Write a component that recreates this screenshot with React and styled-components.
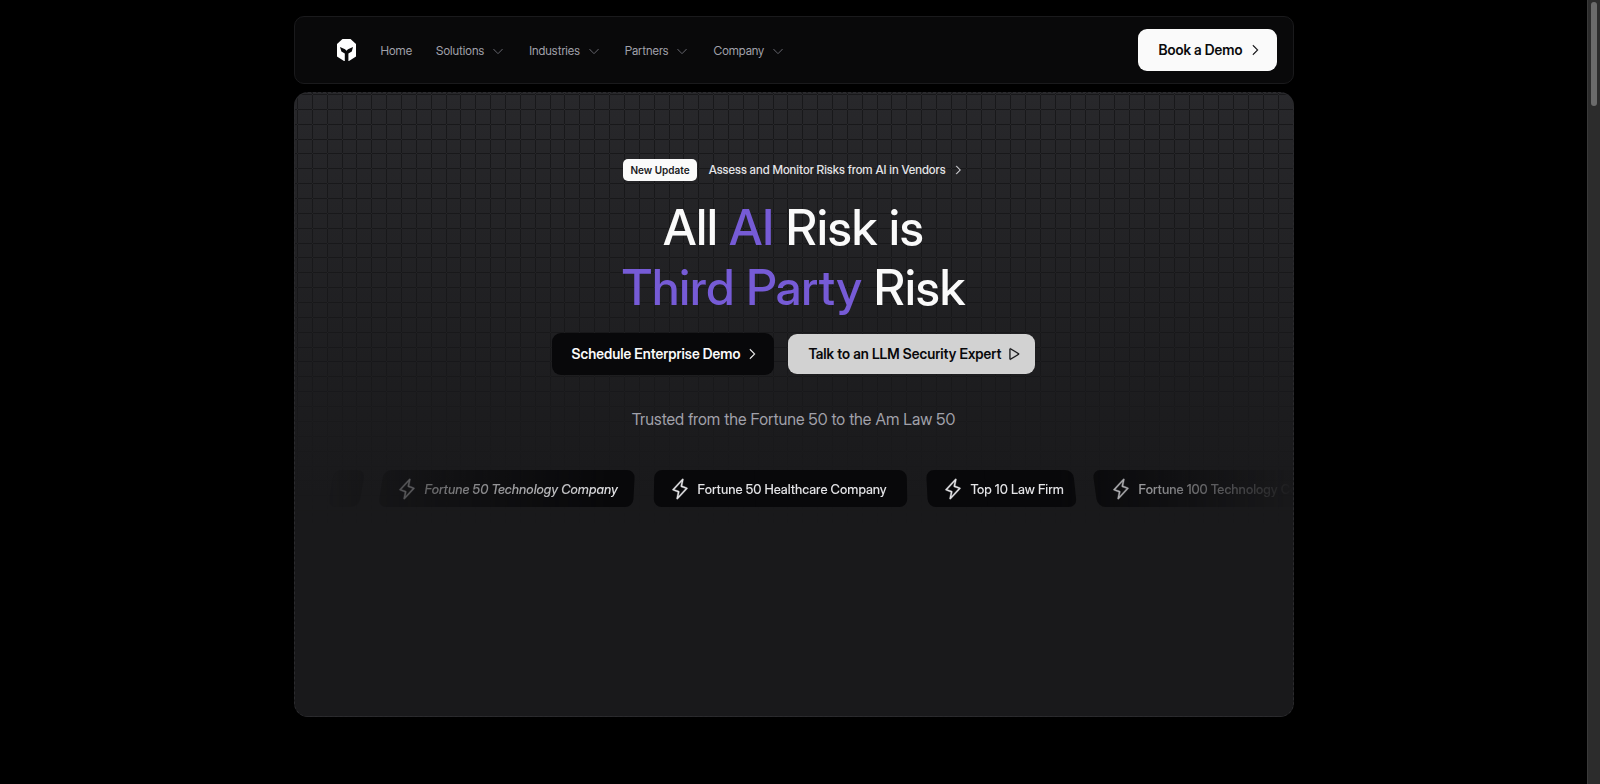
import React from "react";
import styled, { createGlobalStyle, css } from "styled-components";
import { PiCaretDownLight, PiCaretRight, PiLightning, PiPlay } from "react-icons/pi";

const DISPLAY = `"Inter Display", Inter, sans-serif`;

const GlobalStyle = createGlobalStyle`
  * { box-sizing: border-box; }
  body {
    margin: 0;
    background: #000;
    color: #fafafa;
    font-family: ${DISPLAY};
    -webkit-font-smoothing: antialiased;
  }
  #root { min-height: 100vh; display: flex; }
`;

const Page = styled.div`
  flex: 1;
  min-width: 0;
  display: flex;
  flex-direction: column;
  align-items: center;
  gap: 8px;
  padding: 16px 24px 67px;
`;

const ScrollTrack = styled.div`
  flex: none;
  width: 13px;
  padding: 2px 3px;
  background: #2c2c2c;
  border-left: 1px solid #3a3a3a;
`;

const ScrollThumb = styled.div`
  height: 104px;
  border-radius: 4px;
  background: #6b6b6b;
`;

const Header = styled.header`
  width: 100%;
  max-width: 1000px;
  display: flex;
  align-items: center;
  padding: 12px 16px 12px 42px;
  background: #09090a;
  border: 1px solid #1a1a1c;
  border-radius: 10px;
`;

const LogoLink = styled.a`
  display: flex;
  margin-right: 25px;
`;

const Nav = styled.nav`
  flex: 1;
  display: flex;
  gap: 24px;
  padding-top: 2px;
`;

const navItem = css`
  display: flex;
  align-items: center;
  gap: 7px;
  padding: 0;
  border: 0;
  background: none;
  color: #a1a1aa;
  font: 400 12px/18px ${DISPLAY};
  text-decoration: none;
  svg { color: #77777f; }
`;

const NavLink = styled.a`${navItem}`;
const NavButton = styled.button`${navItem}`;

const tones = {
  white: css`background: #fafafa; color: #09090b;`,
  black: css`background: #08080a; color: #fafafa;`,
  grey: css`background: #d2d2d2; color: #09090b;`,
};

const Button = styled.button`
  display: flex;
  align-items: center;
  gap: 5px;
  height: ${(p) => p.$height || 42}px;
  padding: 0 15px 0 20px;
  border: 0;
  border-radius: 9px;
  font: 600 14px/20px ${DISPLAY};
  white-space: nowrap;
  ${(p) => tones[p.$tone]}
  svg { stroke: currentColor; stroke-width: 6; }
`;

const Hero = styled.main`
  position: relative;
  width: 100%;
  max-width: 1000px;
  flex: 1;
  display: flex;
  flex-direction: column;
  align-items: center;
  padding-top: 66px;
  border: 1px dashed #2b2b2e;
  border-radius: 14px;
  background: linear-gradient(#28282b, #19191b 400px);
  overflow: hidden;
`;

const GridLines = styled.svg`
  position: absolute;
  inset: 0;
  width: 100%;
  height: 430px;
  mask-image: linear-gradient(#000 60%, transparent);
`;

const Announcement = styled.a`
  position: relative;
  display: flex;
  align-items: center;
  gap: 12px;
  color: #e4e4e7;
  font-size: 12px;
  font-weight: 500;
  line-height: 22px;
  text-decoration: none;
`;

const Tag = styled.span`
  padding: 0 7px;
  border-radius: 5px;
  background: #fafafa;
  color: #18181b;
  font: 600 10px/22px Inter, sans-serif;
`;

const AnnouncementText = styled.span`
  display: flex;
  align-items: center;
  gap: 6px;
  svg { stroke: currentColor; stroke-width: 6; }
`;

const Title = styled.h1`
  position: relative;
  margin: 17px 0 15px;
  color: #fafafa;
  font: 500 49px/60px ${DISPLAY};
  text-align: center;
`;

const Accent = styled.span`
  color: #765bd6;
`;

const Actions = styled.div`
  position: relative;
  display: flex;
  align-items: center;
  gap: 14px;
`;

const Trusted = styled.p`
  position: relative;
  margin: 32px 0 0;
  color: #a1a1aa;
  font-size: 16px;
  line-height: 24px;
`;

const Marquee = styled.ul`
  position: relative;
  align-self: stretch;
  display: flex;
  gap: 19px;
  margin: 39px 0 0;
  padding: 0 0 0 36px;
  list-style: none;
  overflow: hidden;
  mask-image: linear-gradient(90deg, transparent 2%, #000 32%, #000 76%, transparent);
`;

const Chip = styled.li`
  position: relative;
  isolation: isolate;
  flex: none;
  display: flex;
  align-items: center;
  gap: 7px;
  width: ${(p) => p.$width}px;
  height: 37px;
  padding-left: 15px;
  color: #e4e4e7;
  font: ${(p) => (p.$italic ? "italic" : "normal")} 500 13px/20px ${DISPLAY};
  white-space: nowrap;
  svg { stroke: currentColor; stroke-width: 4; }

  &::before,
  &::after {
    content: "";
    position: absolute;
    z-index: -1;
    top: 0;
    bottom: 0;
    width: 60%;
    background: #08080a;
  }
  &::before {
    left: 0;
    border-radius: 8px 0 0 8px;
    transform: skewX(${(p) => p.$left}deg);
  }
  &::after {
    right: 0;
    border-radius: 0 8px 8px 0;
    transform: skewX(${(p) => p.$right}deg);
  }
`;

const PITCH = 14.86;
const gridPath = [
  ...Array.from({ length: 67 }, (_, i) => `M${Math.round(2 + i * PITCH)} 0v430h1v-430z`),
  ...Array.from({ length: 29 }, (_, i) => `M0 ${Math.round(1 + i * PITCH)}h1000v1h-1000z`),
].join("");

const menus = ["Solutions", "Industries", "Partners", "Company"];

const clients = [
  { name: "", width: 31, left: -10, right: -10 },
  { name: "Fortune 50 Technology Company", width: 254, left: -9, right: -3, italic: true },
  { name: "Fortune 50 Healthcare Company", width: 254, left: -1, right: 1 },
  { name: "Top 10 Law Firm", width: 149, left: 3, right: 6 },
  { name: "Fortune 100 Technology Company", width: 260, left: 8, right: 12 },
];

function Logo() {
  return (
    <svg width="19" height="22" viewBox="0 0 19 22" aria-hidden="true">
      <path fill="#fff" d="M5.500 0h8L19 5v12.500L12 22H7l-7-4.500V5z" />
      <path fill="#09090a" d="M3 8l5 2.200 1.500 1.600L11 10.200 16 8l-1.200 4.600-3.400 2V22H7.800v-7.400l-3.400-2z" />
    </svg>
  );
}

export default function App() {
  return (
    <>
      <GlobalStyle />
      <Page>
        <Header>
          <LogoLink href="#" aria-label="Homepage"><Logo /></LogoLink>
          <Nav>
            <NavLink href="#">Home</NavLink>
            {menus.map((m) => (
              <NavButton key={m} type="button">{m}<PiCaretDownLight size={14} /></NavButton>
            ))}
          </Nav>
          <Button type="button" $tone="white">Book a Demo<PiCaretRight size={14} /></Button>
        </Header>
        <Hero>
          <GridLines aria-hidden="true"><path d={gridPath} fill="#18181a" shapeRendering="crispEdges" /></GridLines>
          <Announcement href="#">
            <Tag>New Update</Tag>
            <AnnouncementText>Assess and Monitor Risks from AI in Vendors<PiCaretRight size={12} /></AnnouncementText>
          </Announcement>
          <Title>All <Accent>AI</Accent> Risk is<br /><Accent>Third Party</Accent> Risk</Title>
          <Actions>
            <Button type="button" $tone="black">Schedule Enterprise Demo<PiCaretRight size={14} /></Button>
            <Button type="button" $tone="grey" $height={40}>Talk to an LLM Security Expert<PiPlay size={14} /></Button>
          </Actions>
          <Trusted>Trusted from the Fortune 50 to the Am Law 50</Trusted>
          <Marquee>
            {clients.map((c, i) => (
              <Chip key={i} $width={c.width} $left={c.left} $right={c.right} $italic={c.italic}>
                {c.name && <PiLightning size={22} />}
                {c.name}
              </Chip>
            ))}
          </Marquee>
        </Hero>
      </Page>
      <ScrollTrack><ScrollThumb /></ScrollTrack>
    </>
  );
}
